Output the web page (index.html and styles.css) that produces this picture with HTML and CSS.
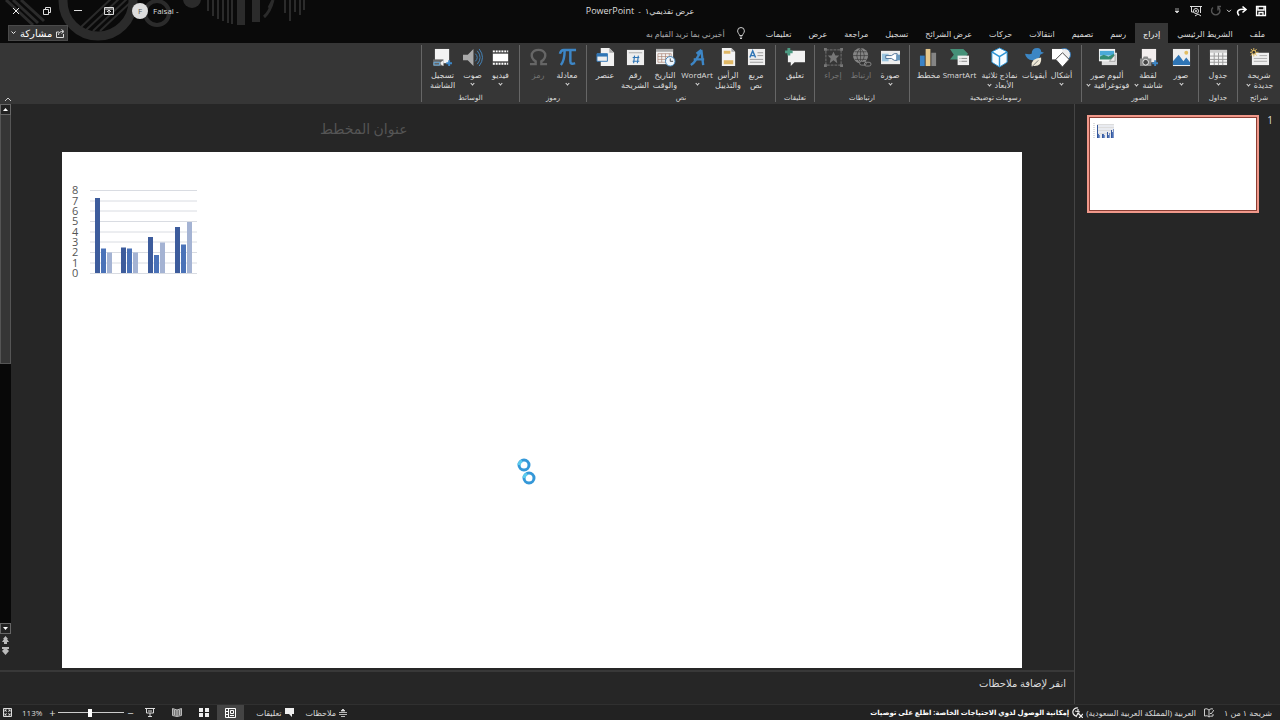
FILE: index.html
```html
<!DOCTYPE html>
<html lang="ar" dir="rtl">
<head>
    <meta charset="UTF-8">
    <meta name="viewport" content="width=device-width, initial-scale=1.0">
    <title>عرض تقديمي١ - PowerPoint</title>
    <link rel="stylesheet" href="styles.css">
</head>
<body>
    <header class="header">
        <svg class="header-art" width="320" height="42" viewBox="0 0 320 42" aria-hidden="true">
            <g fill="none" stroke="#2b2b2b">
                <path d="M6 0l27 25M13 0l25 23M21 0l23 21" stroke-width="3"/>
                <circle cx="98" cy="1" r="35" stroke-width="9"/>
                <path d="M80 28L113 -3M86 30L121 -3M93 31L129 -3M100 31L134 -1" stroke-width="2"/>
                <circle cx="157" cy="13" r="12" stroke-width="4"/>
                <path d="M208 0v11M213 0v16M218 0v19M223 0v21M228 0v23M232 0v24M285 0v13M290 0v21M295 0v12M300 0v15M304 0v10" stroke-width="2"/>
                <path d="M241 0v25M256 0v22" stroke-width="8"/>
                <path d="M264 17Q270 12 273 0M269 8L273 0" stroke-width="3"/>
            </g>
            <circle cx="192" cy="-1" r="9" fill="#2b2b2b"/>
        </svg>
        <div class="title-bar">
            <div class="quick-access">
                <button class="tool" aria-label="حفظ"><svg width="12" height="12" viewBox="0 0 12 12"><path d="M1.500 1.500h9v9h-9zM3 1.500v3.500h6V1.500M4 10.500V7.500h4v3" fill="none" stroke="#fff" stroke-width="1.300"/></svg></button>
                <button class="tool" aria-label="إعادة"><svg width="12" height="12" viewBox="0 0 12 12"><path d="M3 10.500C-.5 6 3 3.500 9 4.500M6.500 1.500l3.500 3-3.500 3" fill="none" stroke="#fff" stroke-width="1.600"/></svg></button>
                <button class="tool tool-small" aria-label="المزيد"><svg width="6" height="4" viewBox="0 0 6 4"><path d="M1 .8l2 2 2-2" fill="none" stroke="#ddd"/></svg></button>
                <button class="tool" aria-label="تكرار"><svg width="12" height="12" viewBox="0 0 12 12"><path d="M3 2.500a4.200 4.200 0 1 0 5.500 0M8 5.500v-4h3" fill="none" stroke="#555" stroke-width="1.400"/></svg></button>
                <button class="tool tool-wide" aria-label="بدء العرض"><svg width="12" height="12" viewBox="0 0 12 12"><path d="M0 1.500h12M1.500 2v5H4M10.500 2v6M5 11l3-2 3 2" fill="none" stroke="#ddd"/><circle cx="6" cy="6" r="2.500" fill="none" stroke="#ddd"/><circle cx="6" cy="6" r="1" fill="#ddd"/></svg></button>
                <button class="tool" aria-label="تخصيص"><svg width="6" height="6" viewBox="0 0 6 6"><path d="M1 1h4M1 3h4L3 5z" fill="#ddd" stroke="#ddd" stroke-width=".7"/></svg></button>
            </div>
            <div class="doc-title">عرض تقديمي١ &nbsp;-&nbsp; <bdi>PowerPoint</bdi></div>
            <div class="window-controls">
                <span class="user" dir="ltr"><span class="avatar">F</span>Faisal -</span>
                <button class="window-button" aria-label="خيارات عرض الشريط"><svg width="10" height="8" viewBox="0 0 10 8"><path d="M.5.5h9v7h-9zM.5 2h9M5 7V3.500M3 5l2-2 2 2" fill="none" stroke="#ddd"/></svg></button>
                <button class="window-button" aria-label="تصغير"><svg width="8" height="8" viewBox="0 0 8 8"><path d="M0 3.500h8" stroke="#ddd"/></svg></button>
                <button class="window-button" aria-label="استعادة"><svg width="8" height="8" viewBox="0 0 8 8"><path d="M.5 2.500h5v5h-5zM2.500 2V.5h5v5H6" fill="none" stroke="#ddd"/></svg></button>
                <button class="window-button" aria-label="إغلاق"><svg width="8" height="8" viewBox="0 0 8 8"><path d="M1 1l6 6M7 1L1 7" stroke="#eee"/></svg></button>
            </div>
        </div>
        <nav class="tabs">
            <button class="tab">ملف</button>
            <button class="tab">الشريط الرئيسي</button>
            <button class="tab active">إدراج</button>
            <button class="tab">رسم</button>
            <button class="tab">تصميم</button>
            <button class="tab">انتقالات</button>
            <button class="tab">حركات</button>
            <button class="tab">عرض الشرائح</button>
            <button class="tab">تسجيل</button>
            <button class="tab">مراجعة</button>
            <button class="tab">عرض</button>
            <button class="tab">تعليمات</button>
            <button class="tell-me"><svg width="8" height="12" viewBox="0 0 8 12"><path d="M2.500 8.500C2.500 7 .6 6 .6 3.900a3.400 3.400 0 0 1 6.800 0C7.400 6 5.500 7 5.500 8.500zM2.800 10h2.400M3 11.500h2" fill="none" stroke="#ccc"/></svg>أخبرني بما تريد القيام به</button>
            <button class="share"><svg width="9" height="9" viewBox="0 0 9 9"><path d="M3 3H.5v5.500h7V5M2.500 6c0-3 2-3.500 4.500-3.500M5.500.5l2.500 2-2.500 2" fill="none" stroke="#ddd"/></svg>مشاركة<svg width="5" height="4" viewBox="0 0 5 4"><path d="M.5.5l2 2 2-2" fill="none" stroke="#eee"/></svg></button>
        </nav>
    </header>

    <section class="ribbon">
        <div class="group w-slides">
            <div class="items">
                <button class="item"><svg class="icon" viewBox="0 0 20 20"><path d="M2 5h18v13H2z" fill="#eee"/><path d="M10 8h8M4 11h14M4 14h14" stroke="#aaa"/><path d="M4 0v9M0 4.500h9M1 1l6 7M7 1L1 8" stroke="#e2bd62"/><circle cx="4" cy="4.500" r="2" fill="#333" stroke="#e2bd62"/></svg><span>شريحة<br>جديدة <i class="caret"></i></span></button>
            </div>
            <div class="group-name">شرائح</div>
        </div>
        <div class="group w-tables">
            <div class="items">
                <button class="item"><svg class="icon" viewBox="0 0 20 20"><path d="M1 2h18v16H1z" fill="#f3f3f3"/><path d="M1 2h18v3H1z" fill="#ccc"/><path d="M1 8.500h18M1 12h18M1 15h18M5.500 5v13M10 5v13M14.500 5v13" stroke="#999"/></svg><span>جدول</span><i class="caret"></i></button>
            </div>
            <div class="group-name">جداول</div>
        </div>
        <div class="group w-pictures">
            <div class="items">
                <button class="item w32"><svg class="icon" viewBox="0 0 20 20"><path d="M1 1h18v18H1z" fill="#eee"/><path d="M1 18V14l6-7 5 7 3-4 4 5v3z" fill="#2f75b5"/><circle cx="15" cy="5" r="2" fill="#e2bd62"/></svg><span>صور</span><i class="caret"></i></button>
                <button class="item w34"><svg class="icon" viewBox="0 0 20 20"><path d="M3 1h15v14H3z" fill="#f3eeee"/><path d="M1 11h3l1-2h4l1 2h3v8H1z" fill="#8a8a8a"/><circle cx="7" cy="15" r="3" fill="#444" stroke="#eee"/><path d="M17 13v6M14 16h6" stroke="#3d86c6" stroke-width="2"/></svg><span>لقطة<br>شاشة <i class="caret"></i></span></button>
                <button class="item w48"><svg class="icon" viewBox="0 0 20 20"><path d="M4 5h16v13H4z" fill="#ddd"/><path d="M1 1h17v13H1z" fill="#f5f5f5"/><path d="M2 3h15v5H2z" fill="#4baad8"/><path d="M2 12V9l4-2 5 2 6-3v6z" fill="#348d74"/><path d="M12 14l6-7v7z" fill="#eee" stroke="#777" stroke-width=".6"/></svg><span>ألبوم صور<br>فوتوغرافية <i class="caret"></i></span></button>
            </div>
            <div class="group-name">الصور</div>
        </div>
        <div class="group w-illustrations">
            <div class="items">
                <button class="item w28"><svg class="icon" viewBox="0 0 20 20"><circle cx="13" cy="7" r="6.500" fill="#eee" stroke="#2f75b5"/><path d="M0 1h11v11H0z" fill="#fff"/><path d="M11 5l7 7-7 8-7-8z" fill="#fff" stroke="#444"/></svg><span>أشكال</span><i class="caret"></i></button>
                <button class="item w26"><svg class="icon" viewBox="0 0 20 20"><path d="M0 6q5 1 7 0 0-6 6-6 4 0 4 4l3 1-4 2q0 6-8 6-7-1-8-7z" fill="#3c86c4"/><path d="M7 19q-1-8 10-9 1 9-7 9z" fill="#eee8d6"/><path d="M7 20l7-7" stroke="#777"/></svg><span>أيقونات</span></button>
                <button class="item w44"><svg class="icon" viewBox="0 0 20 20"><path d="M10 0l8 4v11l-8 5-8-5V4z" fill="#f5fbff" stroke="#2b94d5"/><path d="M2 4l8 5 8-5M10 9v11" fill="none" stroke="#2b94d5" stroke-width="1.500"/></svg><span>نماذج ثلاثية<br>الأبعاد <i class="caret"></i></span></button>
                <button class="item w36"><svg class="icon" viewBox="0 0 20 20"><path d="M0 1h14l5 5-5 6H0l4-5z" fill="#459078"/><path d="M8 8h12v10H8z" fill="#eee"/><path d="M10 11h1M12 11h6M10 14h1M12 14h6" stroke="#888"/></svg><span>SmartArt</span></button>
                <button class="item w26"><svg class="icon" viewBox="0 0 20 20"><path d="M1 8h5v11H1z" fill="#3b82c4"/><path d="M7 1h5v18H7z" fill="#e7c98d"/><path d="M13 5h5v14h-5z" fill="#858585"/></svg><span>مخطط</span></button>
            </div>
            <div class="group-name">رسومات توضيحية</div>
        </div>
        <div class="group w-links">
            <div class="items">
                <button class="item w30"><svg class="icon" viewBox="0 0 20 20"><path d="M0 3h20v14H0z" fill="#eee"/><path d="M1 6h7v8H1z" fill="#9bc5df"/><path d="M5 8h6l3-2h3v7h-3l-3-2H5z" fill="#fff" stroke="#4b6e92"/><path d="M16 7h4v6h-4z" fill="#6c99bd"/></svg><span>صورة</span><i class="caret"></i></button>
                <button class="item w28 off"><svg class="icon" viewBox="0 0 20 20"><circle cx="9" cy="8" r="8" fill="#858585"/><path d="M1 8h16M3 4h12M3 12h12M9 0v16M9 0q-8 8 0 16M9 0q8 8 0 16" fill="none" stroke="#383838" stroke-width=".7"/><rect x="8" y="14" width="7" height="4" rx="2" fill="#333" stroke="#888"/><rect x="13" y="15" width="7" height="4" rx="2" fill="none" stroke="#888"/></svg><span>ارتباط</span></button>
                <button class="item w28 off"><svg class="icon" viewBox="0 0 20 20"><path d="M2 2h16v16H2z" fill="none" stroke="#777" stroke-dasharray="3 1"/><path d="M0 0h3v3H0zM17 0h3v3h-3zM0 17h3v3H0zM17 17h3v3h-3zM10 4l2 4h4l-3 3 1 5-4-3-4 3 1-5-3-3h4z" fill="#777"/></svg><span>إجراء</span></button>
            </div>
            <div class="group-name">ارتباطات</div>
        </div>
        <div class="group w-comments">
            <div class="items">
                <button class="item"><svg class="icon" viewBox="0 0 20 20"><path d="M2 3h18v12H9l-4 4v-4H2z" fill="#f2f2f2"/><path d="M3 0v8M-1 4h8" stroke="#4d9b83" stroke-width="3"/></svg><span>تعليق</span></button>
            </div>
            <div class="group-name">تعليقات</div>
        </div>
        <div class="group w-text">
            <div class="items">
                <button class="item w28"><svg class="icon" viewBox="0 0 20 20"><path d="M1 1h18v17H1z" fill="#eee"/><path d="M3 10l3-7 3 7M4 8h4" fill="none" stroke="#2f75b5" stroke-width="1.500"/><path d="M11 5h6M11 8h6M3 12h14M3 15h14" stroke="#999"/></svg><span>مربع<br>نص</span></button>
                <button class="item w28"><svg class="icon" viewBox="0 0 20 20"><path d="M3 0h10l4 4v15H3z" fill="#f3f3f3"/><path d="M5 3h7v3H5zM5 13h10v4H5z" fill="#dfb765"/><path d="M13 0v4h4" fill="#aaa"/></svg><span>الرأس<br>والتذييل</span></button>
                <button class="item w34"><svg class="icon" viewBox="0 0 20 20"><path d="M3 18Q8 15 14 2M14 2l2 16M6 12h11M9 6l5-4" fill="none" stroke="#3d86c6" stroke-width="2.500"/></svg><span>WordArt</span><i class="caret"></i></button>
                <button class="item w30"><svg class="icon" viewBox="0 0 20 20"><path d="M0 1h18v16H0z" fill="#f3f3f3"/><path d="M0 1h18v3H0z" fill="#aaa"/><path d="M2 6h14v9H2zM2 9h14M2 12h14M6 6v9M10 6v9M14 6v9" fill="none" stroke="#a77f70" stroke-width=".7"/><circle cx="15" cy="14" r="5" fill="#eef7ff" stroke="#4386bb"/><path d="M15 11v3h3" fill="none" stroke="#444"/></svg><span>التاريخ<br>والوقت</span></button>
                <button class="item w30"><svg class="icon" viewBox="0 0 20 20"><path d="M1 2h18v16H1z" fill="#eee"/><path d="M3 5h14" stroke="#aaa"/><path d="M9 8l-1 8M13 8l-1 8M7 10h7M7 14h7" stroke="#2f75b5" stroke-width="1.200"/></svg><span>رقم<br>الشريحة</span></button>
                <button class="item w30"><svg class="icon" viewBox="0 0 20 20"><path d="M5 0h9l5 5v14H5z" fill="#f1f1f1"/><path d="M14 0v5h5" fill="#aaa"/><path d="M1 6h11v8H1z" fill="#eee" stroke="#2f75b5"/><path d="M1 6h11v3H1z" fill="#2f75b5"/></svg><span>عنصر</span></button>
            </div>
            <div class="group-name">نص</div>
        </div>
        <div class="group w-symbols">
            <div class="items">
                <button class="item w30"><svg class="icon" viewBox="0 0 20 20"><path d="M2 6q1-4 4-4h13M7 3q0 10-4 15M13 3v11q0 4 5 2" fill="none" stroke="#3d86c6" stroke-width="2.600"/></svg><span>معادلة</span><i class="caret"></i></button>
                <button class="item w28 off"><svg class="icon" viewBox="0 0 20 20"><path d="M1 17h6v-3Q2 11 3 6q2-4 7-4t7 4q1 5-4 8v3h6" fill="none" stroke="#666" stroke-width="2.500"/></svg><span>رمز</span></button>
            </div>
            <div class="group-name">رموز</div>
        </div>
        <div class="group w-media">
            <div class="items">
                <button class="item w28"><svg class="icon" viewBox="0 0 20 20"><path d="M1 2h18v16H1z" fill="#444"/><path d="M2 6h16v8H2z" fill="#fff"/><path d="M2 3.500h16M2 16.500h16" stroke="#fff" stroke-width="2" stroke-dasharray="2 1"/></svg><span>فيديو</span><i class="caret"></i></button>
                <button class="item w28"><svg class="icon" viewBox="0 0 20 20"><path d="M0 7h5l6-6v18l-6-6H0z" fill="#aaa"/><path d="M13 6q4 4 0 8M15 3q6 7 0 14M17 1q7 9 0 18" fill="none" stroke="#4686bc"/></svg><span>صوت</span><i class="caret"></i></button>
                <button class="item w32"><svg class="icon" viewBox="0 0 20 20"><path d="M2 1h15v15H2z" fill="#f3f3f3"/><path d="M0 12h11v7H0z" fill="#666"/><path d="M1 15h6v3H1z" fill="none" stroke="#6ab1e5"/><path d="M8 15l3-2v6l-3-2z" fill="#eee"/><path d="M17 13v6M14 16h6" stroke="#3d86c6" stroke-width="2"/></svg><span>تسجيل<br>الشاشة</span></button>
            </div>
            <div class="group-name">الوسائط</div>
        </div>
        <button class="collapse" aria-label="طي الشريط"><svg width="8" height="5" viewBox="0 0 8 5"><path d="M1 4l3-3 3 3" fill="none" stroke="#ccc"/></svg></button>
    </section>

    <main class="workspace">
        <aside class="thumbs">
            <span class="thumb-number">1</span>
            <button class="thumb" aria-label="شريحة 1">
                <svg width="21" height="17" viewBox="0 0 21 17"><path d="M4 1h17v14H4z" fill="#e9ebf0"/><path d="M4 1.500h17M4 4.500h17M4 7.500h17M4 10.500h17" stroke="#ddd"/><path d="M1 0v16" stroke="#bbb" stroke-dasharray="1 1"/><path d="M4.500 2v13M9.500 11v4M14.500 9v6M18.500 7v8" stroke="#35579b"/><path d="M5.500 11v4M10.500 11v4M15.500 12v3M19.500 9v6" stroke="#4a72b8"/><path d="M6.500 12v3M11.500 12v3M16.500 10v5M20.500 6v9" stroke="#7f96c6"/></svg>
            </button>
        </aside>
        <div class="editor">
            <div class="stage">
                <div class="stage-main">
                    <div class="chart-title">عنوان المخطط</div>
                    <div class="slide">
                        <svg class="chart" width="140" height="110" viewBox="0 0 140 110">
                            <path d="M28 12.500h107M28 23h107M28 33h107M28 43.500h107M28 54h107M28 64h107M28 74.500h107M28 85h107M28 95.500h107" stroke="#d9dce2"/>
                            <g fill="#3d5c9c"><path d="M33 20h5v75h-5zM59 69.500h5V95h-5zM86 59h5v36h-5zM113 49h5v46h-5z"/></g>
                            <g fill="#4a72b8"><path d="M39 70.500h5V95h-5zM65 70.500h5V95h-5zM92 77h5v18h-5zM119 66.500h5V95h-5z"/></g>
                            <g fill="#a4b3d3"><path d="M45 74.500h5V95h-5zM71 74.500h5V95h-5zM98 64.500h5V95h-5zM125 44h5v51h-5z"/></g>
                            <g class="axis"><text x="10" y="16">8</text><text x="10" y="27">7</text><text x="10" y="37">6</text><text x="10" y="47">5</text><text x="10" y="58">4</text><text x="10" y="68">3</text><text x="10" y="78">2</text><text x="10" y="89">1</text><text x="10" y="99">0</text></g>
                        </svg>
                        <svg class="busy" width="22" height="28" viewBox="0 0 22 28"><g fill="none" stroke="#3598d8" stroke-width="3"><circle cx="8" cy="7" r="5"/><circle cx="13" cy="20" r="5"/></g><path d="M3 7a5 5 0 0 1 3-4M8 20a5 5 0 0 1 3-4" fill="none" stroke="#5bcbed" stroke-width="3"/></svg>
                    </div>
                </div>
                <div class="scrollbar">
                    <button class="scroll-button" aria-label="أعلى"><svg width="5" height="3" viewBox="0 0 7 4"><path d="M0 4l3.500-4L7 4z" fill="#fff"/></svg></button>
                    <div class="scroll-track"><div class="scroll-thumb"></div></div>
                    <button class="scroll-button" aria-label="أسفل"><svg width="5" height="3" viewBox="0 0 7 4"><path d="M0 0h7L3.500 4z" fill="#fff"/></svg></button>
                    <button class="slide-nav" aria-label="الشريحة السابقة"><svg width="7" height="8" viewBox="0 0 7 8"><path d="M3.500 0L6 3H5l2 3H5v2H2V6H0l2-3H1z" fill="#bbb"/></svg></button>
                    <button class="slide-nav" aria-label="الشريحة التالية"><svg width="7" height="8" viewBox="0 0 7 8"><path d="M0 0h7v2H5l2 2-3.500 4L0 4l2-2H0z" fill="#bbb"/></svg></button>
                </div>
            </div>
            <div class="notes">انقر لإضافة ملاحظات</div>
        </div>
    </main>

    <footer class="status">
        <span class="slide-count">شريحة ١ من ١</span>
        <button class="status-button" aria-label="تدقيق إملائي"><svg width="10" height="10" viewBox="0 0 10 10"><path d="M5 2v7M5 2Q3 0 .5 1v7q3-1 4.500 1 1-1 4-1V6M5 2q2-2 4-1M6 5l1 1 3-4" fill="none" stroke="#ccc"/></svg></button>
        <button class="status-button language">العربية (المملكة العربية السعودية)</button>
        <button class="status-button access"><svg width="11" height="11" viewBox="0 0 11 11"><path d="M6 1A4 4 0 1 0 4 9M3 4l5 1M6 2v4l-2 4M6 6l2 2M7 7l4 4M11 7l-4 4" fill="none" stroke="#eee" stroke-width="1.200"/></svg>إمكانية الوصول لذوي الاحتياجات الخاصة: اطلع على توصيات</button>
        <div class="status-left">
            <button class="status-button"><svg width="8" height="8" viewBox="0 0 8 8"><path d="M0 3.500h8M0 5.500h8M2 7.500h4M2 2l2-2 2 2z" fill="#ddd" stroke="#ddd" stroke-width=".8"/></svg>ملاحظات</button>
            <button class="status-button comments"><svg width="9" height="9" viewBox="0 0 9 9"><path d="M0 0h9v6H7v3L4 6H0z" fill="#eee"/></svg>تعليقات</button>
            <button class="view active" aria-label="عادي"><svg width="11" height="10" viewBox="0 0 11 10"><path d="M.5.5h10v9H.5zM3.500 1v8M5.500 2.500h3v3h-3zM5 7.500h4M1 3.500h2M1 6.500h2" fill="none" stroke="#fff"/></svg></button>
            <button class="view" aria-label="فارز الشرائح"><svg width="10" height="9" viewBox="0 0 10 9"><path d="M0 0h4v4H0zM6 0h4v4H6zM0 5h4v4H0zM6 5h4v4H6z" fill="#eee"/></svg></button>
            <button class="view" aria-label="عرض القراءة"><svg width="10" height="9" viewBox="0 0 10 9"><path d="M.5.500L5 2l4.500-1.500v7L5 8.500.5 7.500zM5 2v6.500M2.500 2v5M7.500 2v5" fill="#777" stroke="#bbb"/></svg></button>
            <button class="view" aria-label="عرض الشرائح"><svg width="10" height="9" viewBox="0 0 10 9"><path d="M0 .5h10M1.500 1v4h7V1M3 3h4M5 5v3M3 8.500h4" fill="none" stroke="#ddd"/></svg></button>
            <button class="zoom-step" aria-label="تصغير العرض">−</button>
            <input class="zoom-slider" type="range" min="0" max="100" value="52" aria-label="تكبير/تصغير">
            <button class="zoom-step" aria-label="تكبير العرض">+</button>
            <button class="zoom-value" dir="ltr">113%</button>
            <button class="status-button" aria-label="ملاءمة"><svg width="9" height="9" viewBox="0 0 9 9"><path d="M.5.500h8v8h-8z" fill="none" stroke="#ddd"/><path d="M1.500 4V1.500H4L3 2.500l1 1-.5.5-1-1zM7.500 4V1.500H5l1 1-1 1 .5.5 1-1zM1.500 5v2.500H4l-1-1 1-1-.5-.5-1 1zM7.500 5v2.500H5l1-1-1-1 .5-.5 1 1z" fill="#ddd"/></svg></button>
        </div>
    </footer>
</body>
</html>
```
FILE: styles.css
```css
* {
    box-sizing: border-box;
}
body {
    margin: 0;
    height: 100vh;
    display: flex;
    flex-direction: column;
    overflow: hidden;
    background: #262626;
    color: #ddd;
    font-family: "Open Sans", "DejaVu Sans", sans-serif;
    font-size: 8px;
}
button {
    margin: 0;
    padding: 0;
    border: 0;
    background: none;
    color: inherit;
    font: inherit;
    white-space: nowrap;
}
svg {
    display: block;
    flex: none;
}

/* title bar and tabs */
.header {
    position: relative;
    background: #0a0a0a;
}
.header-art {
    position: absolute;
    left: 0;
    top: 0;
}
.title-bar {
    position: relative;
    display: grid;
    grid-template-columns: 1fr auto 1fr;
    align-items: center;
    height: 23px;
    padding-bottom: 2px;
}
.quick-access {
    display: flex;
    align-items: center;
    padding-right: 10px;
}
.tool {
    display: flex;
    justify-content: center;
    width: 19px;
}
.tool-small {
    width: 7px;
}
.tool-wide {
    width: 20px;
}
.doc-title {
    line-height: 12px;
}
.doc-title bdi {
    font-size: 9px;
}
.window-controls {
    display: flex;
    justify-content: flex-end;
    align-items: center;
}
.user {
    display: flex;
    align-items: center;
    gap: 5px;
    margin-left: 8px;
}
.avatar {
    display: grid;
    place-items: center;
    width: 16px;
    height: 16px;
    border-radius: 50%;
    background: #ddd;
    color: #555;
}
.window-button {
    display: flex;
    justify-content: center;
    width: 31px;
}
.tabs {
    position: relative;
    display: flex;
    align-items: stretch;
    gap: 1px;
    height: 20px;
    padding-right: 7px;
}
.tab {
    padding: 0 8px;
}
.tab.active {
    background: #363636;
    color: #fff;
}
.tell-me {
    display: flex;
    align-items: center;
    gap: 12px;
    margin-right: 12px;
    color: #aaa;
}
.share {
    display: flex;
    align-items: center;
    gap: 4px;
    height: 16px;
    margin: 2px auto 0 8px;
    padding: 0 2px;
    border: 1px solid #4a4a4a;
    background: #383838;
    color: #fff;
    font-size: 10px;
}

/* ribbon */
.ribbon {
    display: flex;
    height: 61px;
    padding-top: 2px;
    background: #363636;
}
.group {
    display: flex;
    flex-direction: column;
    flex: none;
    height: 57px;
    border-left: 1px solid #666;
}
.items {
    display: flex;
    justify-content: center;
    flex: 1;
}
.group-name {
    height: 9px;
    line-height: 10px;
    text-align: center;
    font-size: 7px;
}
.w-slides { width: 43px; }
.w-tables { width: 39px; }
.w-pictures { width: 117px; }
.w-illustrations { width: 172px; }
.w-links { width: 95px; }
.w-comments { width: 39px; }
.w-text { width: 189px; }
.w-symbols { width: 67px; }
.w-media { width: 98px; }
.w-text .items {
    justify-content: flex-start;
    padding-right: 5px;
}
.item {
    display: flex;
    flex-direction: column;
    align-items: center;
    padding-top: 3px;
    line-height: 10px;
}
.w26 { width: 26px; }
.w28 { width: 28px; }
.w30 { width: 30px; }
.w32 { width: 32px; }
.w34 { width: 34px; }
.w36 { width: 36px; }
.w44 { width: 44px; }
.w48 { width: 48px; }
.icon {
    width: 19px;
    height: 19px;
    margin-bottom: 3px;
    overflow: visible;
}
.caret {
    display: inline-block;
    width: 3px;
    height: 3px;
    margin: 2px;
    border: solid #ddd;
    border-width: 0 1px 1px 0;
    transform: rotate(45deg);
}
.off {
    color: #777;
}
.collapse {
    align-self: flex-end;
    margin: 0 auto 2px 4px;
}

/* slide area */
.workspace {
    display: flex;
    flex: 1;
    min-height: 0;
}
.thumbs {
    display: flex;
    align-items: flex-start;
    gap: 8px;
    width: 206px;
    padding: 11px 7px;
    border-left: 1px solid #444;
}
.thumb-number {
    width: 6px;
    font-size: 10px;
    line-height: 11px;
}
.thumb {
    width: 172px;
    height: 98px;
    padding: 6px 4px;
    border: 2px solid #f0988a;
    outline: 1px solid #8b3f35;
    outline-offset: -3px;
    background: #fff;
    direction: ltr;
    display: flex;
    align-items: flex-start;
}
.editor {
    display: flex;
    flex-direction: column;
    flex: 1;
}
.stage {
    display: flex;
    flex: 1;
}
.stage-main {
    display: flex;
    flex-direction: column;
    flex: 1;
    padding: 0 52px 2px 51px;
}
.chart-title {
    height: 48px;
    padding-left: 258px;
    line-height: 52px;
    direction: ltr;
    color: #555;
    font-family: "Liberation Serif", "DejaVu Sans", serif;
    font-size: 14px;
}
.slide {
    position: relative;
    flex: 1;
    background: #fff;
    direction: ltr;
}
.chart {
    margin-top: 26px;
}
.axis {
    fill: #555;
    font-family: "Open Sans", sans-serif;
    font-size: 11px;
}
.busy {
    position: absolute;
    left: 454px;
    top: 306px;
}
.scrollbar {
    display: flex;
    flex-direction: column;
    width: 11px;
    padding-bottom: 14px;
}
.scroll-button {
    display: grid;
    place-items: center;
    height: 11px;
    border: 1px solid #666;
    background: #222;
}
.scroll-track {
    flex: 1;
    background: #080808;
}
.scroll-thumb {
    height: 49%;
    border: 1px solid #555;
    border-top: 0;
    background: #363636;
}
.slide-nav {
    display: grid;
    place-items: center;
    height: 11px;
}
.notes {
    height: 34px;
    padding: 5px 8px;
    border-top: 2px solid #383838;
    font-size: 10px;
    line-height: 12px;
}

/* status bar */
.status {
    display: flex;
    align-items: center;
    height: 16px;
    padding: 0 8px 0 3px;
    border-top: 1px solid #303030;
    background: #222;
}
.status-button {
    display: flex;
    align-items: center;
    gap: 3px;
}
.slide-count {
    margin-left: 10px;
}
.language {
    margin: 0 8px 0 3px;
}
.access {
    color: #fff;
    font-size: 7px;
    font-weight: bold;
}
.status-left {
    display: flex;
    align-items: center;
    margin-right: auto;
}
.comments {
    margin: 0 12px;
}
.view {
    display: grid;
    place-items: center;
    width: 27px;
    height: 15px;
}
.view.active {
    background: #444;
}
.zoom-step {
    width: 12px;
    font-size: 11px;
    line-height: 12px;
}
.zoom-slider {
    appearance: none;
    width: 66px;
    height: 9px;
    margin: 0;
    background: linear-gradient(#ccc, #ccc) center / 100% 1px no-repeat;
}
.zoom-slider::-webkit-slider-thumb {
    appearance: none;
    width: 4px;
    height: 8px;
    background: #fff;
}
.zoom-value {
    margin: 0 4px 0 10px;
}
```
